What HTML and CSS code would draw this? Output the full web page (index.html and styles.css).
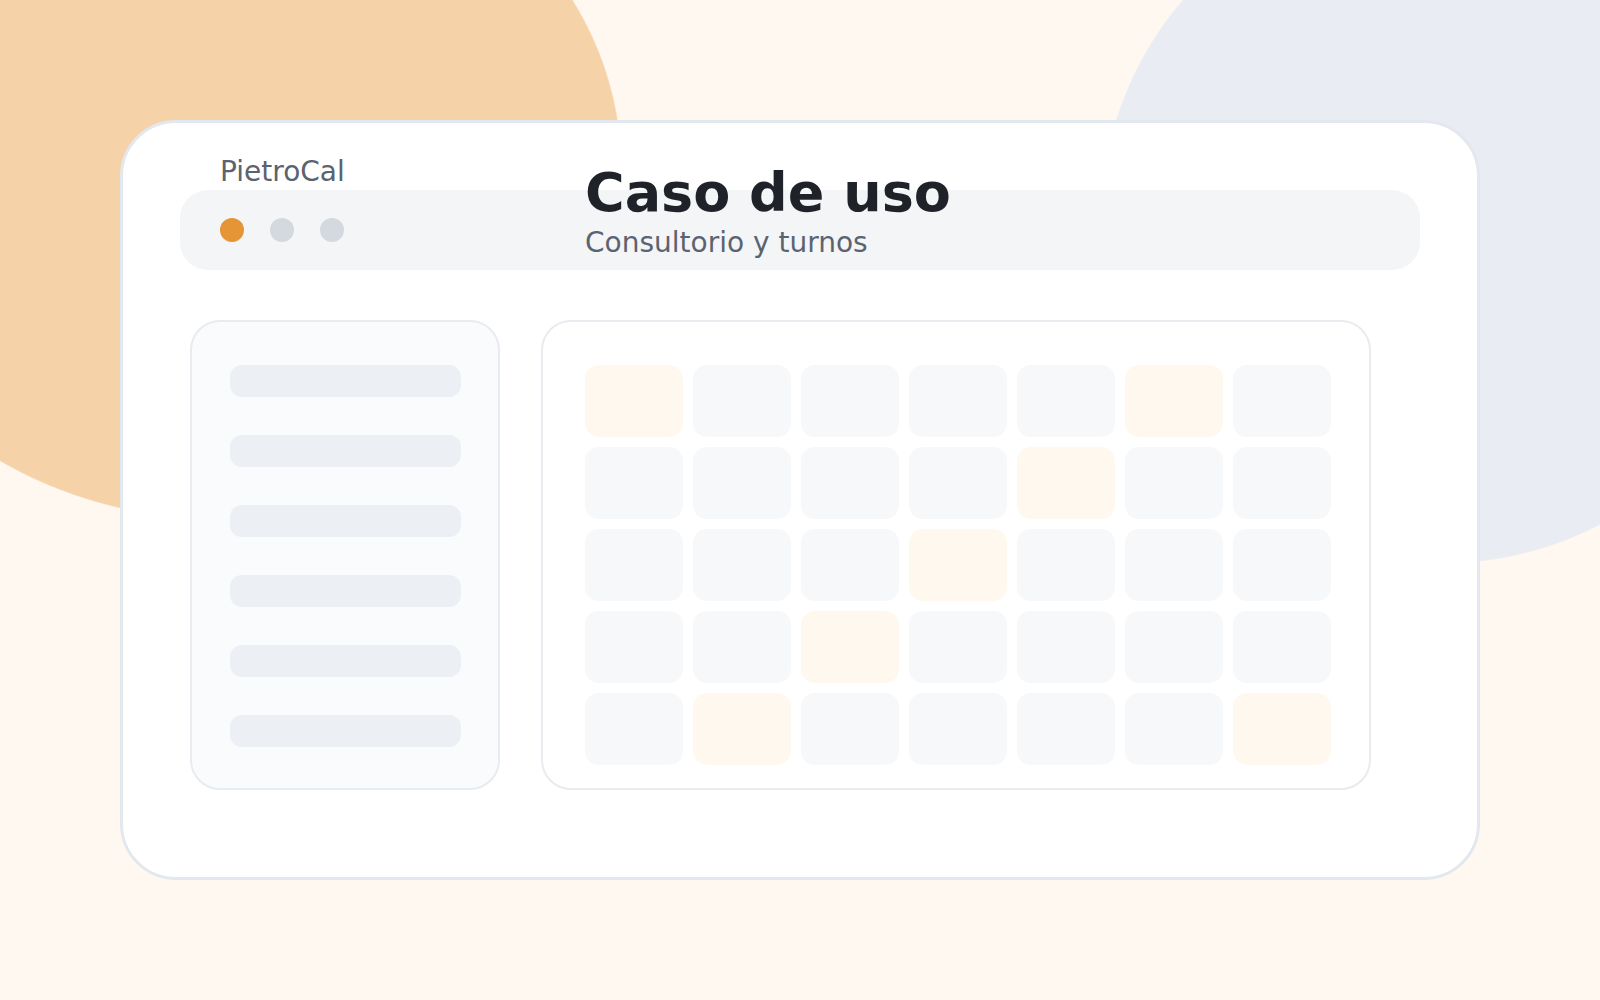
FILE: index.html
```html
<!DOCTYPE html>
<html lang="es">
<head>
<meta charset="utf-8">
<title>PietroCal — Caso de uso</title>
<link rel="stylesheet" href="styles.css">
</head>
<body>
<section class="card">
  <header class="header">
    <div class="bar">
      <span class="dot dot-active"></span>
      <span class="dot"></span>
      <span class="dot"></span>
    </div>
    <div class="brand">PietroCal</div>
    <div class="heading">
      <h1 class="title">Caso de uso</h1>
      <p class="subtitle">Consultorio y turnos</p>
    </div>
  </header>

  <main class="main">
    <aside class="sidebar">
      <div class="line"></div>
      <div class="line"></div>
      <div class="line"></div>
      <div class="line"></div>
      <div class="line"></div>
      <div class="line"></div>
    </aside>

    <div class="calendar">
      <div class="grid">
        <div class="cell hl"></div><div class="cell"></div><div class="cell"></div><div class="cell"></div><div class="cell"></div><div class="cell hl"></div><div class="cell"></div>
        <div class="cell"></div><div class="cell"></div><div class="cell"></div><div class="cell"></div><div class="cell hl"></div><div class="cell"></div><div class="cell"></div>
        <div class="cell"></div><div class="cell"></div><div class="cell"></div><div class="cell hl"></div><div class="cell"></div><div class="cell"></div><div class="cell"></div>
        <div class="cell"></div><div class="cell"></div><div class="cell hl"></div><div class="cell"></div><div class="cell"></div><div class="cell"></div><div class="cell"></div>
        <div class="cell"></div><div class="cell hl"></div><div class="cell"></div><div class="cell"></div><div class="cell"></div><div class="cell"></div><div class="cell hl"></div>
      </div>
    </div>
  </main>
</section>
</body>
</html>
```

FILE: styles.css
```css
* {
  box-sizing: border-box;
}

html, body {
  margin: 0;
  padding: 0;
}

body {
  width: 1600px;
  height: 1000px;
  overflow: hidden;
  background-color: #fef8f0;
  background-image:
    radial-gradient(ellipse 401px 352px at 221px 168px, #f6d2a8 99.6%, rgba(246, 210, 168, 0) 100%),
    radial-gradient(circle 342px at 1442px 222px, #e9edf3 99.6%, rgba(233, 237, 243, 0) 100%);
  background-repeat: no-repeat;
  font-family: "DejaVu Sans", "Liberation Sans", sans-serif;
}

.card {
  margin: 120px 0 0 120px;
  width: 1360px;
  height: 760px;
  background: #ffffff;
  border: 3px solid #e3e8ee;
  border-radius: 56px;
  padding: 67px 57px 0 57px;
}

.header {
  position: relative;
}

.bar {
  height: 80px;
  background: #f3f5f7;
  border-radius: 28px;
  display: flex;
  align-items: center;
  gap: 26px;
  padding-left: 40px;
}

.dot {
  width: 24px;
  height: 24px;
  border-radius: 50%;
  background: #d4d8df;
}

.dot-active {
  background: #e59536;
}

.brand {
  position: absolute;
  left: 40px;
  top: -32px;
  font-size: 28px;
  line-height: 1;
  color: #5b6270;
}

.heading {
  position: absolute;
  left: 405px;
  top: -24px;
}

.title {
  margin: 0;
  font-size: 54px;
  line-height: 1;
  font-weight: 700;
  color: #1f2329;
}

.subtitle {
  margin: 9px 0 0 0;
  font-size: 28px;
  line-height: 1;
  color: #5c6370;
}

.main {
  display: flex;
  align-items: flex-start;
  margin-top: 50px;
  padding-left: 10px;
  gap: 41px;
}

.sidebar {
  width: 310px;
  height: 470px;
  background: #f9fbfc;
  border: 2px solid #e8ebef;
  border-radius: 30px;
  padding: 43px 37px 0 38px;
  display: flex;
  flex-direction: column;
  gap: 38px;
}

.line {
  height: 32px;
  border-radius: 12px;
  background: #eceff4;
}

.calendar {
  width: 830px;
  height: 470px;
  background: #ffffff;
  border: 2px solid #e8ebef;
  border-radius: 30px;
  padding: 43px 0 0 42px;
}

.grid {
  display: grid;
  grid-template-columns: repeat(7, 98px);
  grid-auto-rows: 72px;
  gap: 10px;
}

.cell {
  border-radius: 14px;
  background: #f7f8fa;
}

.cell.hl {
  background: #fff8ef;
}
```
